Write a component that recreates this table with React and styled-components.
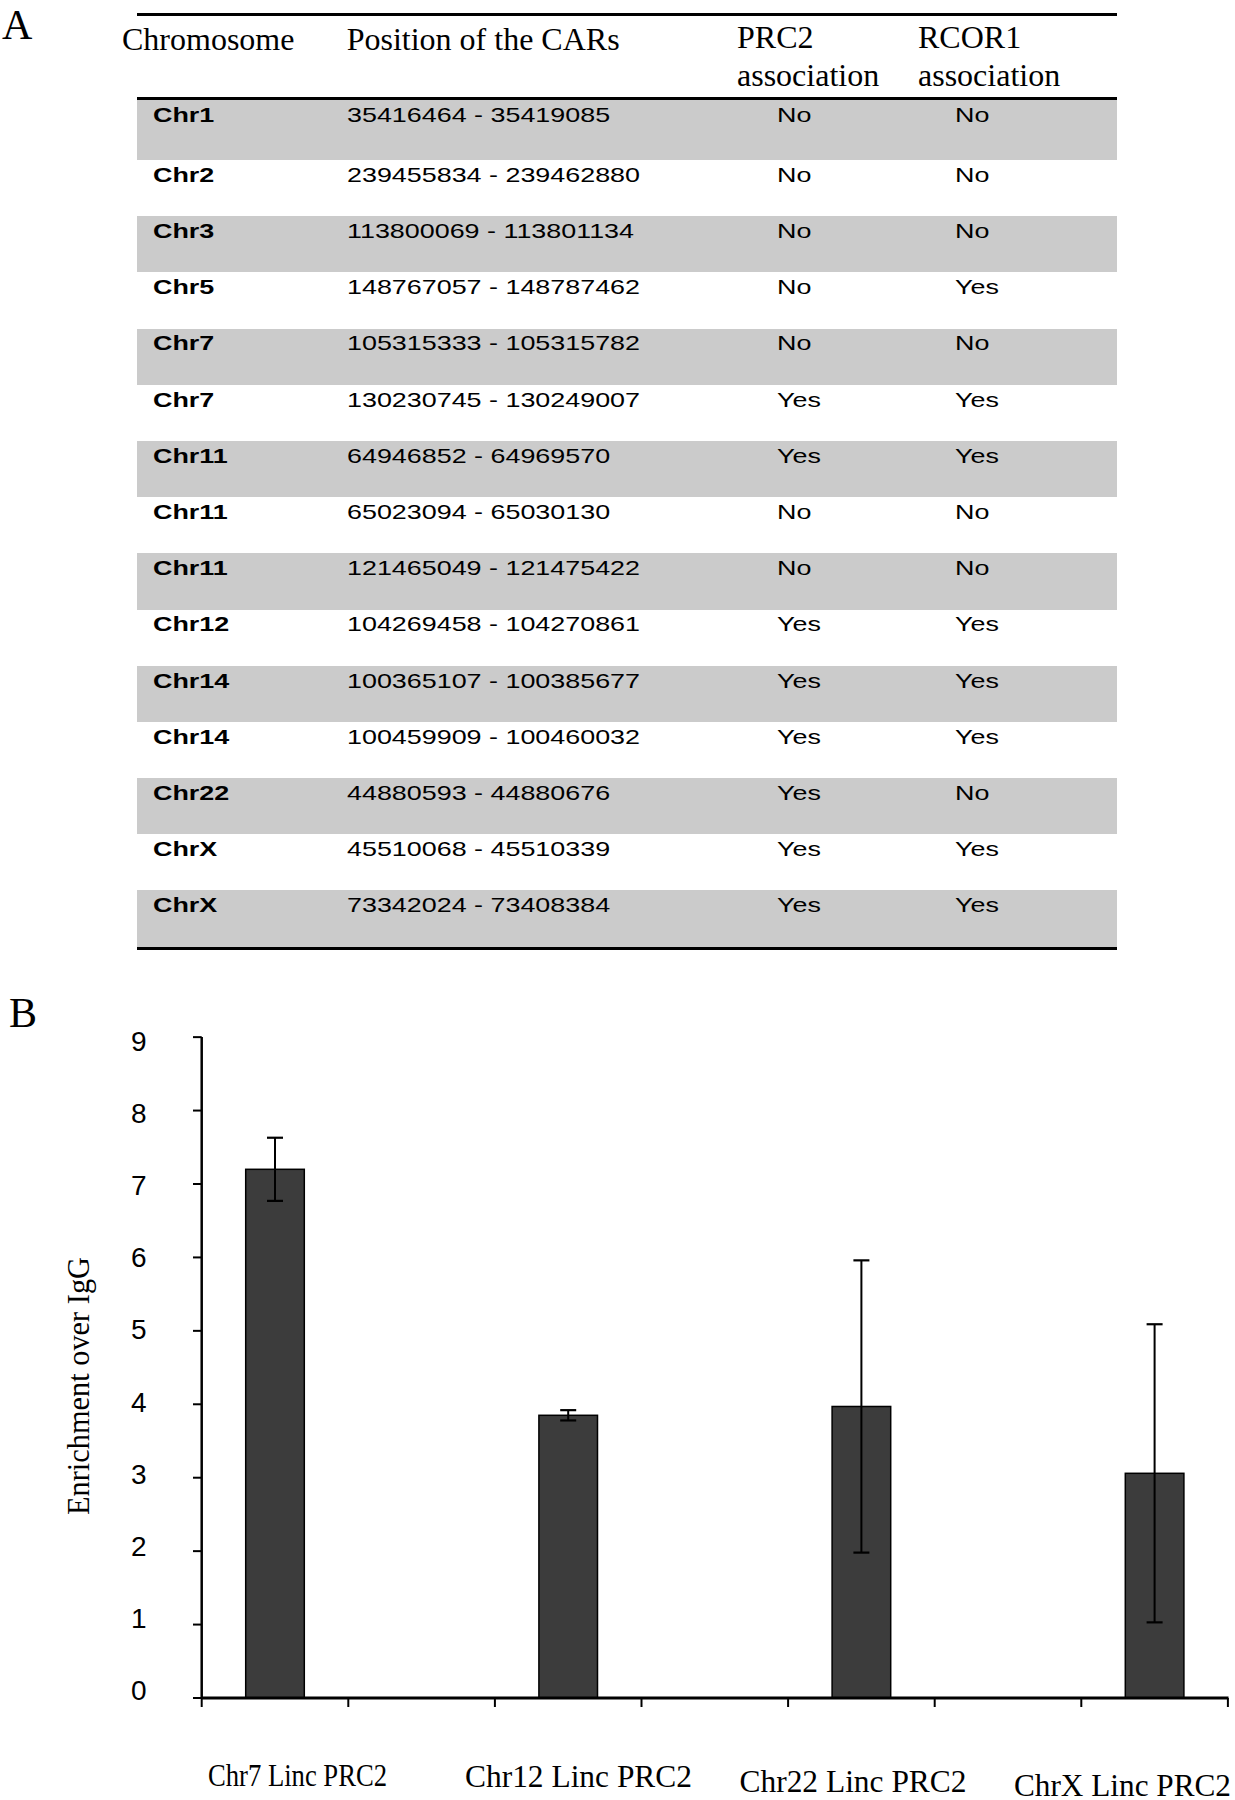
import React from 'react'
import styled, { createGlobalStyle } from 'styled-components'

const rows = [
  ['Chr1', '35416464 - 35419085', 'No', 'No'],
  ['Chr2', '239455834 - 239462880', 'No', 'No'],
  ['Chr3', '113800069 - 113801134', 'No', 'No'],
  ['Chr5', '148767057 - 148787462', 'No', 'Yes'],
  ['Chr7', '105315333 - 105315782', 'No', 'No'],
  ['Chr7', '130230745 - 130249007', 'Yes', 'Yes'],
  ['Chr11', '64946852 - 64969570', 'Yes', 'Yes'],
  ['Chr11', '65023094 - 65030130', 'No', 'No'],
  ['Chr11', '121465049 - 121475422', 'No', 'No'],
  ['Chr12', '104269458 - 104270861', 'Yes', 'Yes'],
  ['Chr14', '100365107 - 100385677', 'Yes', 'Yes'],
  ['Chr14', '100459909 - 100460032', 'Yes', 'Yes'],
  ['Chr22', '44880593 - 44880676', 'Yes', 'No'],
  ['ChrX', '45510068 - 45510339', 'Yes', 'Yes'],
  ['ChrX', '73342024 - 73408384', 'Yes', 'Yes'],
]

const headers = [
  { lines: ['Chromosome'], shift: -15, top: 7.7, lh: 31 },
  { lines: ['Position of the CARs'], shift: 15.7, top: 7.7, lh: 31 },
  { lines: ['PRC2', 'association'], shift: -22, top: 2.2, lh: 38 },
  { lines: ['RCOR1', 'association'], shift: -19, top: 2.2, lh: 38 },
]

const pads = [16, 16, 18, 18]

// chart geometry, page coordinates
const axisX = 201.7
const zeroY = 1698
const unit = 73.43
const catW = 146.6
const barW = 58.6
const bars = [
  { cat: 0, value: 7.2, err: 0.43 },
  { cat: 2, value: 3.85, err: 0.07 },
  { cat: 4, value: 3.97, err: 1.99 },
  { cat: 6, value: 3.06, err: 2.03 },
]
const labels = [
  { text: 'Chr7 Linc PRC2', x: 208, y: 1786, w: 179 },
  { text: 'Chr12 Linc PRC2', x: 465, y: 1786.5, w: 227 },
  { text: 'Chr22 Linc PRC2', x: 739.5, y: 1792, w: 227 },
  { text: 'ChrX Linc PRC2', x: 1014, y: 1796, w: 217 },
]

const vy = (v) => zeroY - unit * v
// the tick labels sit a little tighter than the ticks themselves
const labelY = (v) => 1051 + 72.1 * (9 - v)

function BarChart() {
  return (
    <ChartSvg viewBox="48 980 1187 820" width="1187" height="820">
      {[0, 1, 2, 3, 4, 5, 6, 7, 8, 9].map((v) => (
        <g key={v}>
          <line x1={193} x2={axisX} y1={vy(v)} y2={vy(v)} stroke="#000" strokeWidth="2" />
          <TickLabel x={146.5} y={labelY(v)} textAnchor="end">{v}</TickLabel>
        </g>
      ))}
      {[0, 1, 2, 3, 4, 5, 6, 7].map((i) => (
        <line key={i} x1={axisX + catW * i} x2={axisX + catW * i} y1={zeroY} y2={zeroY + 9} stroke="#000" strokeWidth="2" />
      ))}
      {bars.map((b) => {
        const cx = axisX + catW * (b.cat + 0.5)
        const top = vy(b.value + b.err)
        const bottom = vy(b.value - b.err)
        return (
          <g key={b.cat}>
            <rect x={cx - barW / 2} y={vy(b.value)} width={barW} height={unit * b.value} fill="#3c3c3c" stroke="#000" strokeWidth="1.5" />
            <line x1={cx} x2={cx} y1={top} y2={bottom} stroke="#000" strokeWidth="2" />
            <line x1={cx - 8} x2={cx + 8} y1={top} y2={top} stroke="#000" strokeWidth="2.2" />
            <line x1={cx - 8} x2={cx + 8} y1={bottom} y2={bottom} stroke="#000" strokeWidth="2.2" />
          </g>
        )
      })}
      <line x1={axisX} x2={axisX} y1={1037} y2={zeroY + 1} stroke="#000" strokeWidth="2.5" />
      <line x1={axisX} x2={1228.5} y1={zeroY} y2={zeroY} stroke="#000" strokeWidth="3" />
      {labels.map((l) => (
        <CategoryLabel key={l.text} x={l.x} y={l.y} textLength={l.w} lengthAdjust="spacingAndGlyphs">
          {l.text}
        </CategoryLabel>
      ))}
      <AxisTitle x={0} y={0} textAnchor="middle" textLength={258} lengthAdjust="spacingAndGlyphs" transform="translate(89 1386) rotate(-90)">
        Enrichment over IgG
      </AxisTitle>
    </ChartSvg>
  )
}

function App() {
  return (
    <Page>
      <GlobalStyle />
      <PanelA>
        <PanelLetter $size={42} $width={137} $left={2} $top={3.5}>A</PanelLetter>
        <Table>
          <HeaderRow>
            {headers.map((h) => (
              <HeadCell key={h.lines[0]} $shift={h.shift} $top={h.top} $lh={h.lh}>
                {h.lines.map((line) => (
                  <div key={line}>{line}</div>
                ))}
              </HeadCell>
            ))}
          </HeaderRow>
          {rows.map((r, i) => (
            <Row key={i} $first={i === 0} $shaded={i % 2 === 0}>
              {r.map((text, j) => (
                <Cell key={j} $pad={pads[j]}>
                  <CellText $bold={j === 0}>{text}</CellText>
                </Cell>
              ))}
            </Row>
          ))}
        </Table>
      </PanelA>
      <PanelB>
        <PanelLetter $size={42} $width={48} $left={9} $top={12.5}>B</PanelLetter>
        <BarChart />
      </PanelB>
    </Page>
  )
}

const GlobalStyle = createGlobalStyle`
body{
    margin: 0;
    background: #fff;
}
`
const Page = styled.div`
width: 1235px;
height: 1800px;
overflow: hidden;
background: #fff;
color: #000;
`
const PanelA = styled.div`
display: flex;
align-items: flex-start;
`
const PanelLetter = styled.div`
flex: 0 0 ${(p) => p.$width}px;
box-sizing: border-box;
padding-left: ${(p) => p.$left}px;
padding-top: ${(p) => p.$top}px;
font-family: "Liberation Serif", "Times New Roman", serif;
font-size: ${(p) => p.$size}px;
line-height: ${(p) => p.$size}px;
`
const Table = styled.div`
width: 980px;
margin-top: 13px;
border-top: 3px solid #000;
border-bottom: 3px solid #000;
`
const columns = '194px 428px 178px 180px'
const HeaderRow = styled.div`
display: grid;
grid-template-columns: ${columns};
height: 81px;
border-bottom: 3px solid #000;
`
const HeadCell = styled.div`
padding-top: ${(p) => p.$top}px;
margin-left: ${(p) => p.$shift}px;
white-space: nowrap;
font-family: "Liberation Serif", "Times New Roman", serif;
font-size: 32px;
line-height: ${(p) => p.$lh}px;
`
const Row = styled.div`
display: grid;
grid-template-columns: ${columns};
height: ${(p) => (p.$first ? 60 : 56.2)}px;
background: ${(p) => (p.$shaded ? '#cbcbcb' : '#fff')};
`
const Cell = styled.div`
padding-left: ${(p) => p.$pad}px;
padding-top: 3.9px;
white-space: nowrap;
`
const CellText = styled.span`
display: inline-block;
font-family: "Liberation Sans", Arial, sans-serif;
font-size: 21px;
line-height: 21px;
font-weight: ${(p) => (p.$bold ? 700 : 400)};
transform: scaleX(1.28);
transform-origin: left center;
`
const PanelB = styled.div`
display: flex;
align-items: flex-start;
margin-top: 30.2px;
height: 820px;
`
const ChartSvg = styled.svg`
display: block;
flex: none;
overflow: hidden;
`
const TickLabel = styled.text`
font-family: "Liberation Sans", Arial, sans-serif;
font-size: 28px;
fill: #000;
`
const CategoryLabel = styled.text`
font-family: "Liberation Serif", "Times New Roman", serif;
font-size: 31px;
fill: #000;
`
const AxisTitle = styled.text`
font-family: "Liberation Serif", "Times New Roman", serif;
font-size: 32px;
fill: #000;
`

export default App
